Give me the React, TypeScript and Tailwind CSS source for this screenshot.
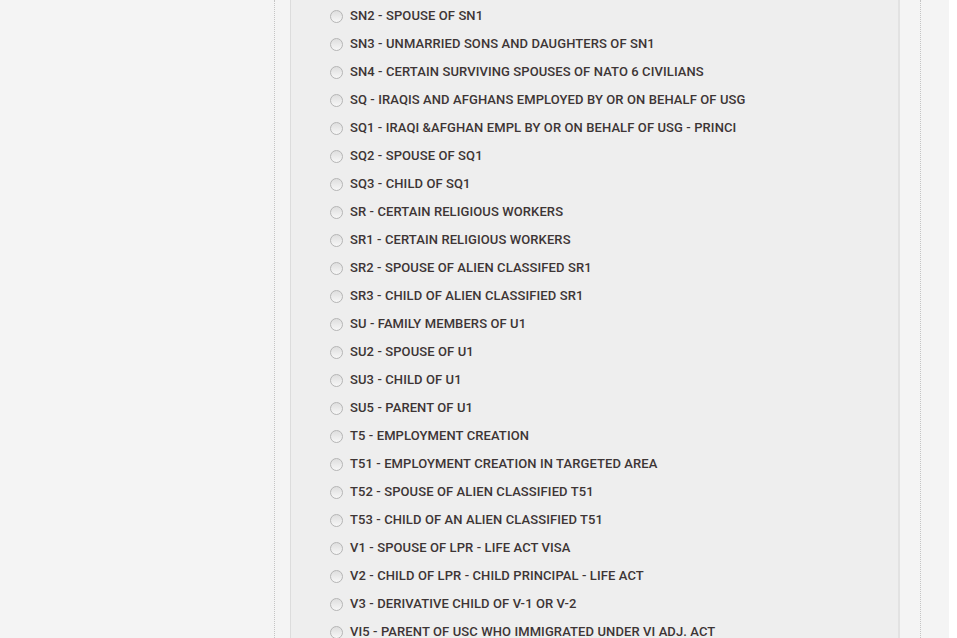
import React from "react";

const options = [
  "SN2 - SPOUSE OF SN1",
  "SN3 - UNMARRIED SONS AND DAUGHTERS OF SN1",
  "SN4 - CERTAIN SURVIVING SPOUSES OF NATO 6 CIVILIANS",
  "SQ - IRAQIS AND AFGHANS EMPLOYED BY OR ON BEHALF OF USG",
  "SQ1 - IRAQI &AFGHAN EMPL BY OR ON BEHALF OF USG - PRINCI",
  "SQ2 - SPOUSE OF SQ1",
  "SQ3 - CHILD OF SQ1",
  "SR - CERTAIN RELIGIOUS WORKERS",
  "SR1 - CERTAIN RELIGIOUS WORKERS",
  "SR2 - SPOUSE OF ALIEN CLASSIFED SR1",
  "SR3 - CHILD OF ALIEN CLASSIFIED SR1",
  "SU - FAMILY MEMBERS OF U1",
  "SU2 - SPOUSE OF U1",
  "SU3 - CHILD OF U1",
  "SU5 - PARENT OF U1",
  "T5 - EMPLOYMENT CREATION",
  "T51 - EMPLOYMENT CREATION IN TARGETED AREA",
  "T52 - SPOUSE OF ALIEN CLASSIFIED T51",
  "T53 - CHILD OF AN ALIEN CLASSIFIED T51",
  "V1 - SPOUSE OF LPR - LIFE ACT VISA",
  "V2 - CHILD OF LPR - CHILD PRINCIPAL - LIFE ACT",
  "V3 - DERIVATIVE CHILD OF V-1 OR V-2",
  "VI5 - PARENT OF USC WHO IMMIGRATED UNDER VI ADJ. ACT",
];

const Radio = () => (
  <span className="w-[13px] h-[13px] rounded-full border border-[#b5b5b5] bg-gradient-to-b from-[#dedede] to-[#f7f7f7] shrink-0" />
);

const App = () => {
  return (
    <div className="h-screen overflow-hidden bg-white flex flex-col font-['Roboto',sans-serif]">
      <div className="h-px bg-[#d6d6d6]" />
      <div className="h-px bg-[#a8a8a8]" />
      <div className="flex-1 flex">
        {/* left rail */}
        <div className="w-[290px] bg-[#f4f4f4]">
          <div className="w-[275px] h-full border-r border-dotted border-[#c4c4c4]" />
        </div>

        {/* visa class list */}
        <div className="w-[610px] bg-[#eeeeee] border-l border-[#dcdcdc] border-r-2 border-r-[#e2e2e2] pl-[39px] pt-[2px]">
          <ul>
            {options.map((opt) => (
              <li key={opt} className="h-[28px] flex items-center">
                <Radio />
                <span className="ml-[7px] text-[13px] font-medium tracking-[0.1px] text-[#3d3535] whitespace-nowrap">
                  {opt}
                </span>
              </li>
            ))}
          </ul>
        </div>

        {/* right rail */}
        <div className="w-[49px] bg-[#f4f4f4]">
          <div className="w-[21px] h-full border-r border-dotted border-[#c4c4c4]" />
        </div>
        <div className="flex-1 bg-white" />
      </div>
    </div>
  );
};

export default App;
